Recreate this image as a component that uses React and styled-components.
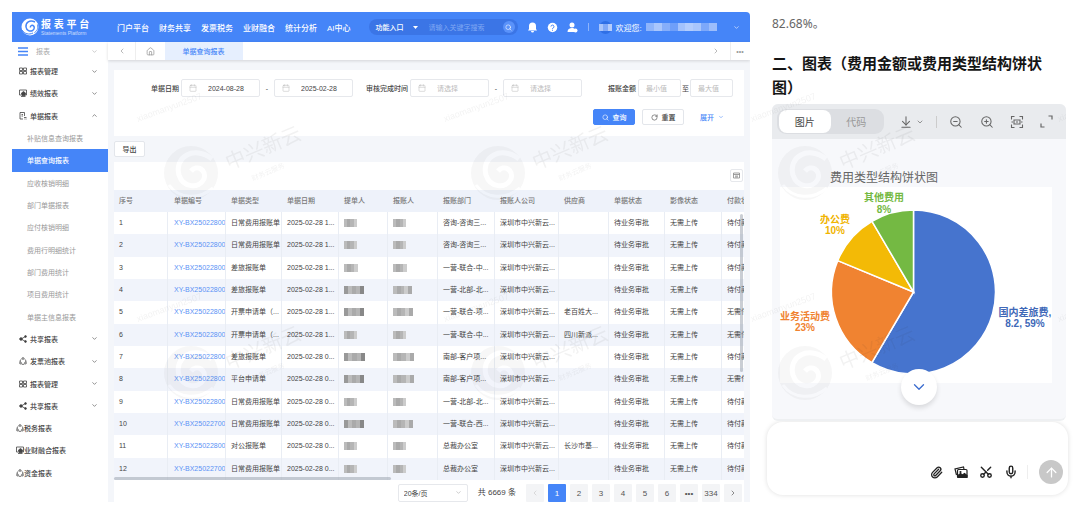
import React from "react";
import styled, { createGlobalStyle, css } from "styled-components";
import {
  ArrowDownToLine,
  ArrowUp,
  Calendar,
  ChevronDown,
  ChevronLeft,
  ChevronRight,
  ChevronUp,
  House,
  Mic,
  Paperclip,
  RotateCw,
  Scissors,
  Search,
  ZoomIn,
  ZoomOut,
} from "lucide-react";

const GlobalStyle = createGlobalStyle`
  * { box-sizing: border-box; }
  body {
    margin: 0;
    background: #fff;
    color: #444;
    font-family: "Liberation Sans", "Noto Sans CJK SC", sans-serif;
    font-size: 7px;
  }
  button, input, select, textarea { font: inherit; color: inherit; margin: 0; }
  button { cursor: pointer; padding: 0; border: 0; background: none; }
  a { color: inherit; text-decoration: none; }
  h2, h3, p, ul { margin: 0; padding: 0; }
  ul { list-style: none; }
  svg { display: block; flex: none; }
`;

const blue = "#4585f8";

const Page = styled.div`
  position: relative;
  display: grid;
  grid-template-columns: minmax(0, 738fr) minmax(0, 305fr);
  column-gap: 15px;
  min-height: 100vh;
  padding: 12px 10px 14px 12px;
`;

/* ---------- report platform ---------- */

const Platform = styled.section`
  display: flex;
  flex-direction: column;
  border-radius: 0 4px 0 0;
  overflow: hidden;
`;

const TopBar = styled.header`
  display: flex;
  align-items: center;
  height: 30px;
  padding: 0 10px 0 9px;
  background: ${blue};
  color: #fff;
`;

const Brand = styled.a`
  display: flex;
  align-items: center;
  gap: 2px;
  width: 96px;
`;

const BrandName = styled.strong`
  display: block;
  font-size: 10px;
  line-height: 12px;
  font-weight: 700;
  white-space: nowrap;
`;

const BrandSub = styled.small`
  display: block;
  font-size: 5px;
  line-height: 5px;
  opacity: 0.7;
  white-space: nowrap;
`;

const Nav = styled.nav`
  display: flex;
  gap: 10px;
  font-size: 8px;
  font-weight: 500;
  white-space: nowrap;
`;

const SearchPill = styled.form`
  display: flex;
  align-items: center;
  width: 149px;
  height: 16px;
  margin-left: 18px;
  padding: 0 3px 0 7px;
  border-radius: 8px;
  background: #3b75e6;
`;

const EntryButton = styled.button`
  display: flex;
  align-items: center;
  gap: 9px;
  margin-right: 11px;
  font-weight: 500;
  white-space: nowrap;
`;

const SearchInput = styled.input`
  flex: 1;
  min-width: 0;
  padding: 0;
  border: 0;
  outline: 0;
  background: none;
  &::placeholder { color: #7fa7f3; opacity: 1; }
`;

const RoundSearch = styled.button`
  display: grid;
  place-items: center;
  width: 12px;
  height: 12px;
  border-radius: 50%;
  background: #5a92fa;
`;

const TopIcons = styled.div`
  display: flex;
  gap: 9px;
  margin-left: 9px;
`;

const TopDivider = styled.span`
  width: 1px;
  height: 8px;
  margin: 0 10px;
  background: #8db4fb;
`;

const User = styled.div`
  display: flex;
  flex: 1;
  align-items: center;
  gap: 4px;
  font-size: 8px;
  white-space: nowrap;
`;

const Avatar = styled.span`
  display: grid;
  place-items: center;
  width: 13px;
  height: 13px;
  border-radius: 50%;
  background: #2f6fe6;
`;

const UserMore = styled.button`
  margin-left: auto;
`;

const Mosaic = styled.span`
  display: block;
  width: ${(p) => p.$w}px;
  height: ${(p) => p.$h || 8}px;
  background: ${(p) =>
    `linear-gradient(90deg, ${p.$tones
      .map((t, i) => `${t} ${(i * 100) / p.$tones.length}% ${((i + 1) * 100) / p.$tones.length}%`)
      .join(", ")})`};
`;

const Body = styled.div`
  display: flex;
  flex: 1;
`;

const Side = styled.aside`
  display: flex;
  flex-direction: column;
  width: 96px;
  padding-bottom: 18px;
  background: #fff;
`;

const SideTop = styled.div`
  display: flex;
  align-items: center;
  gap: 8px;
  height: 18px;
  padding: 0 10px 0 6px;
  color: #aaa;
`;

const Menu = styled.ul`
  display: flex;
  flex: 1;
  flex-direction: column;
`;

const MenuItem = styled.li`
  display: flex;
  flex: 1;
`;

const menuKinds = {
  group: css`
    gap: 3px;
    padding: 0 10px 0 7px;
    font-weight: 500;
  `,
  sub: css`
    padding-left: 15px;
    color: #999;
  `,
  active: css`
    padding-left: 15px;
    background: ${blue};
    color: #fff;
    font-weight: 500;
  `,
  flat: css`
    padding-left: 4px;
    font-weight: 500;
  `,
};

const MenuLink = styled.a`
  display: flex;
  flex: 1;
  align-items: center;
  white-space: nowrap;
  ${(p) => menuKinds[p.$kind]}
`;

const Push = styled.span`
  margin-left: auto;
`;

const Main = styled.main`
  display: flex;
  flex: 1;
  flex-direction: column;
  min-width: 0;
  background: #f4f6fa;
`;

const Tabs = styled.div`
  display: flex;
  height: 18px;
  background: #fff;
  box-shadow: 0 1px 3px rgba(0, 0, 0, 0.14);
`;

const TabButton = styled.button`
  display: grid;
  place-items: center;
  width: ${(p) => p.$w}px;
  color: ${(p) => (p.$on ? blue : "#999")};
  background: ${(p) => (p.$on ? "#e6effe" : "#fff")};
  border-right: 1px solid ${(p) => (p.$edge ? "#eee" : "transparent")};
  font-weight: ${(p) => (p.$on ? 500 : 400)};
  margin-left: ${(p) => (p.$last ? "auto" : "0")};
`;

const Content = styled.div`
  display: flex;
  flex: 1;
  flex-direction: column;
  padding: 10px 6px 0 6px;
`;

const Filters = styled.form`
  height: 66px;
  padding: 9px 11px 0 37px;
  background: #fff;
`;

const FilterRow = styled.div`
  display: flex;
  align-items: center;
  white-space: nowrap;
`;

const FieldLabel = styled.label`
  margin-right: 2px;
  margin-left: ${(p) => p.$before || 0}px;
  font-weight: 500;
`;

const Field = styled.span`
  display: flex;
  align-items: center;
  flex: ${(p) => (p.$short ? "43 1 43px" : "79 1 79px")};
  min-width: 0;
  height: 18px;
  padding: 0 7px;
  border: 1px solid #e6e8ec;
  border-radius: 2px;
  color: #bbb;
`;

const FieldInput = styled.input`
  flex: 1;
  min-width: 0;
  padding: 0 0 0 ${(p) => (p.$short ? 0 : 11)}px;
  border: 0;
  outline: 0;
  background: none;
  color: #444;
  &::placeholder { color: #bbb; opacity: 1; }
`;

const Dash = styled.span`
  width: 14px;
  text-align: center;
`;

const To = styled.span`
  width: 9px;
  text-align: center;
`;

const Actions = styled.div`
  display: flex;
  justify-content: flex-end;
  gap: 7px;
  margin-top: 12px;
`;

const ActionButton = styled.button`
  display: flex;
  align-items: center;
  justify-content: center;
  gap: 4px;
  width: 42px;
  height: 16px;
  border: ${(p) => (p.$kind === "text" ? "0" : "1px solid")};
  border-color: ${(p) => (p.$kind === "primary" ? blue : "#e3e6eb")};
  border-radius: 2px;
  background: ${(p) => (p.$kind === "primary" ? blue : "#fff")};
  color: ${(p) => (p.$kind === "primary" ? "#fff" : p.$kind === "text" ? blue : "#444")};
  font-weight: 500;
`;

const ExportBar = styled.div`
  display: flex;
  align-items: center;
  height: 26px;
`;

const ExportButton = styled.button`
  width: 31px;
  height: 16px;
  border: 1px solid #e3e6eb;
  border-radius: 2px;
  background: #fff;
  font-weight: 500;
`;

const TableTools = styled.div`
  display: flex;
  justify-content: flex-end;
  height: 28px;
  padding: 7px 1px 0;
  background: #fff;
`;

const ToolButton = styled.button`
  display: grid;
  place-items: center;
  width: 13px;
  height: 13px;
  border: 1px solid #e6e8ec;
  border-radius: 2px;
`;

const TableBox = styled.div`
  position: relative;
  background: #fff;
`;

const Table = styled.table`
  width: 100%;
  height: 290px;
  table-layout: fixed;
  border-collapse: separate;
  border-spacing: 0;
  th, td {
    height: 22px;
    padding: 0 0 0 5px;
    overflow: hidden;
    text-align: left;
    white-space: nowrap;
    line-height: 10px;
    border-right: 1px solid #e9edf4;
  }
  th { background: #eef2fa; color: #777; font-weight: 500; border-color: #eef2fa; }
  tr:nth-child(even) td { background: #f1f4fb; }
  th:nth-child(2), td:nth-child(2) { padding-left: 6px; }
  th:last-child, td:last-child { border-right: 0; }
`;

const CodeLink = styled.a`
  color: #5a92f5;
`;

const ScrollThumb = styled.span`
  position: absolute;
  border-radius: 2px;
  background: rgba(150, 158, 170, 0.5);
  ${(p) =>
    p.$vertical
      ? css`
          top: 24px;
          right: 1px;
          width: 3px;
          height: 158px;
        `
      : css`
          left: 0;
          bottom: 0;
          width: 44%;
          height: 3px;
        `}
`;

const Pager = styled.div`
  display: flex;
  flex: 1;
  align-items: flex-start;
  justify-content: flex-end;
  gap: 4px;
  padding: 4px 2px 0;
  background: #fff;
  font-size: 8px;
`;

const SizePick = styled.span`
  position: relative;
  display: flex;
  width: 70px;
  height: 18px;
  svg { position: absolute; right: 6px; top: 5px; color: #aaa; }
`;

const SizeSelect = styled.select`
  width: 100%;
  padding: 0 5px;
  appearance: none;
  border: 1px solid #e6e8ec;
  border-radius: 2px;
  background: #fff;
  font-size: 7px;
`;

const Total = styled.span`
  margin: 0 6px 0 6px;
  line-height: 18px;
`;

const PageButton = styled.button`
  width: 18px;
  height: 18px;
  display: grid;
  place-items: center;
  border-radius: 1px;
  background: ${(p) => (p.$on ? blue : "#f3f4f6")};
  color: ${(p) => (p.$on ? "#fff" : p.$off ? "#ccc" : "#555")};
`;

/* ---------- chat ---------- */

const Chat = styled.section`
  display: flex;
  flex-direction: column;
`;

const Message = styled.article`
  padding: 0 4px 0 7px;
  font-family: "Noto Sans", "Noto Sans CJK SC", sans-serif;
`;

const Line = styled.p`
  padding-top: 3px;
  font-size: 12px;
  line-height: 18px;
  color: #666;
`;

const Heading = styled.h2`
  margin: 18px 0 5px;
  padding-right: 20px;
  font-family: "Noto Sans CJK SC", sans-serif;
  font-size: 15px;
  line-height: 24px;
  font-weight: 700;
  color: #151515;
`;

const Card = styled.div`
  position: relative;
  border-radius: 6px;
  overflow: hidden;
  background: #f7f8fb;
  border-bottom: 2px solid #eef0f2;
`;

const CardBar = styled.div`
  display: flex;
  align-items: center;
  height: 35px;
  padding: 0 13px 0 5px;
  background: #e9ebee;
  color: #666;
`;

const Segments = styled.div`
  display: flex;
  width: 107px;
  height: 25px;
  padding: 1px 2px;
  border-radius: 9px;
  background: #dcdee2;
`;

const Segment = styled.button`
  flex: 1;
  border-radius: 8px;
  font-size: 10px;
  background: ${(p) => (p.$on ? "#fff" : "transparent")};
  color: ${(p) => (p.$on ? "#444" : "#999")};
`;

const BarTools = styled.div`
  display: flex;
  flex: 1;
  align-items: center;
  justify-content: space-between;
  margin-left: 15px;
`;

const DownloadButton = styled.button`
  display: flex;
  align-items: center;
  gap: 3px;
`;

const BarDivider = styled.span`
  width: 1px;
  height: 12px;
  margin: 0 -4px;
  background: #ccc;
`;

const ChartTitle = styled.h3`
  padding: 29px 70px 0 0;
  font-family: "Noto Sans CJK SC", sans-serif;
  font-size: 12px;
  line-height: 18px;
  font-weight: 400;
  text-align: center;
  color: #666;
`;

const ChartBox = styled.div`
  margin: 1px 14px 36px 8px;
  background: #fff;
  svg { width: 100%; height: auto; }
`;

const DownButton = styled.button`
  position: absolute;
  left: 50%;
  bottom: 14px;
  display: grid;
  place-items: center;
  width: 36px;
  height: 36px;
  transform: translateX(-50%);
  border-radius: 50%;
  background: #fff;
  box-shadow: 0 3px 5px rgba(0, 0, 0, 0.12);
  color: #3f6fd0;
`;

const Composer = styled.form`
  display: flex;
  flex-direction: column;
  height: 73px;
  margin: 1px 2px 0 2px;
  padding: 10px 5px 11px 14px;
  border-radius: 16px;
  background: #fff;
  box-shadow: 0 0 5px rgba(0, 0, 0, 0.13);
  color: #222;
`;

const Prompt = styled.textarea`
  flex: 1;
  min-height: 0;
  border: 0;
  padding: 0;
  outline: 0;
  resize: none;
  background: none;
  font-size: 12px;
`;

const ComposerTools = styled.div`
  display: flex;
  align-items: center;
  justify-content: flex-end;
  gap: 11px;
`;

const CutButton = styled.button`
  svg { transform: rotate(-90deg); }
`;

const ComposerDivider = styled.span`
  width: 1px;
  height: 14px;
  margin-left: -2px;
  background: #eee;
`;

const Send = styled.button`
  display: grid;
  place-items: center;
  width: 24px;
  height: 24px;
  border-radius: 50%;
  background: #c8c8c8;
  color: #fff;
`;

const MarkLayer = styled.svg`
  position: absolute;
  left: 130px;
  top: 80px;
  width: calc(100% - 144px);
  height: 340px;
  pointer-events: none;
`;

/* ---------- drawings ---------- */

const LogoMark = () => (
  <svg width="18" height="18" viewBox="0 0 36 36">
    <circle cx="18" cy="18" r="17" fill="#fff" />
    <path d="M28 8C17 3 9 9 10 18c1 7 8 10 13 7 4-2 5-8 1-10-3-1-6 1-5 4" fill="none" stroke={blue} strokeWidth="3" />
    <path d="M2 24c5 8 14 10 22 6" fill="none" stroke={blue} strokeWidth="2" />
    <path d="M33 13c2 8-1 13-6 16" fill="none" stroke={blue} strokeWidth="2" />
  </svg>
);

const svgBase = { width: 8, height: 8, viewBox: "0 0 16 16", fill: "none", stroke: "currentColor", strokeWidth: 1.6 };

const sideIcons = {
  grid: (
    <svg {...svgBase}>
      <path d="M1 2h6v5H1zM9 2h6v5H9zM1 9h6v5H1zM9 9h6v5H9z" />
    </svg>
  ),
  monitor: (
    <svg {...svgBase}>
      <path d="M5 12H1V2h14v10h-3M4 15h9" />
      <path d="M9 5l4 3-1 5H6L5 8z" fill="currentColor" />
    </svg>
  ),
  doc: (
    <svg {...svgBase}>
      <path d="M8 14H2V1h9v7M5 5h3M5 8h3M10 11h5M13 14h2M10 14h1" />
    </svg>
  ),
  share: (
    <svg {...svgBase}>
      <path d="M13 3L4 8l9 5" />
      <circle cx="4" cy="8" r="2.6" fill="currentColor" />
      <circle cx="13" cy="3" r="1.8" fill="currentColor" />
      <circle cx="13" cy="13" r="1.8" fill="currentColor" />
    </svg>
  ),
  nodes: (
    <svg {...svgBase}>
      <path d="M5 4a6 6 0 0 0-3 6M11 4a6 6 0 0 1 3 6M5 14a6 6 0 0 0 6 0" />
      <circle cx="8" cy="3" r="1.8" />
      <circle cx="3" cy="12" r="1.8" />
      <circle cx="13" cy="12" r="1.8" />
    </svg>
  ),
};

const BellIcon = () => (
  <svg width="11" height="11" viewBox="0 0 22 22" fill="#fff">
    <path d="M11 1a7 7 0 0 0-7 7v6l-2 3h18l-2-3V8a7 7 0 0 0-7-7zM8 18h6a3 3 0 0 1-6 0z" />
  </svg>
);

const HelpIcon = () => (
  <svg width="11" height="11" viewBox="0 0 22 22">
    <circle cx="11" cy="11" r="9.5" fill="#fff" />
    <path d="M8 9a3 3 0 1 1 4 3c-1 .4-1 1-1 2M11 15.500v2" fill="none" stroke={blue} strokeWidth="2" />
  </svg>
);

const PersonIcon = () => (
  <svg width="11" height="11" viewBox="0 0 22 22" fill="#fff">
    <circle cx="10" cy="6" r="5" />
    <path d="M1 20c0-6 4-8 9-8 3 0 4 .6 5 1.500V20z" />
    <circle cx="17" cy="17" r="4" />
  </svg>
);

const MenuBars = () => (
  <svg width="10" height="9" viewBox="0 0 10 9" stroke={blue} strokeWidth="1.400">
    <path d="M0 1h10M0 4.500h10M0 8h10" />
  </svg>
);

const FitIcon = () => (
  <svg width="14" height="14" viewBox="0 0 28 28" fill="none" stroke="currentColor" strokeWidth="2.200">
    <path d="M3 9V3h6M19 3h6v6M25 19v6h-6M9 25H3v-6M3 14h3M22 14h3M8 10h12v8H8zM12 14h4" />
  </svg>
);

const ExpandIcon = () => (
  <svg width="13" height="13" viewBox="0 0 26 26" fill="none" stroke="currentColor" strokeWidth="2.400">
    <path d="M17 2h7v7M9 24H2v-7" />
  </svg>
);

const PhotosIcon = () => (
  <svg width="14" height="13" viewBox="0 0 28 26" fill="none" stroke="currentColor" strokeWidth="2.400">
    <path d="M5 18L2 6l17-4 1 4" />
    <rect x="7" y="7" width="19" height="16" rx="2" />
    <path d="M8 19l5-4 4 3 4-3 5 4v4H8z" fill="currentColor" />
    <circle cx="13" cy="12" r="1" fill="currentColor" />
  </svg>
);

const PrintIcon = () => (
  <svg width="7" height="7" viewBox="0 0 14 14" fill="none" stroke="#888" strokeWidth="1.600">
    <path d="M1 2h12v10H1zM1 5h12M4 8h6M4 10h6" />
  </svg>
);

const Watermark = () => (
  <MarkLayer aria-hidden="true">
    <defs>
      <pattern id="mark" width="307" height="200" patternUnits="userSpaceOnUse">
        <g opacity="0.04" fill="#222">
          <circle cx="61" cy="93" r="27" />
          <path d="M82 79c-18-14-38-2-33 16 4 13 20 14 25 4 3-9-7-15-13-8" fill="none" stroke="#fff" strokeWidth="5" />
          <path d="M39 105c10 14 30 15 44 3" fill="none" stroke="#fff" strokeWidth="3" />
        </g>
        <g fill="#222" fillOpacity="0.06" fontFamily="Liberation Sans, Noto Sans CJK SC, sans-serif">
          <text x="99" y="90" fontSize="20" transform="rotate(-23 99 90)">中兴新云</text>
          <text x="123" y="101" fontSize="7" transform="rotate(-23 123 101)">财务云服务</text>
          <text x="8" y="42" fontSize="9" transform="rotate(-20 8 42)">xiaomanyun2507</text>
        </g>
      </pattern>
    </defs>
    <rect width="100%" height="100%" fill="url(#mark)" />
  </MarkLayer>
);

const slices = [
  { name: "国内差旅费", color: "#4674ce", from: 0, to: 210.5 },
  { name: "业务活动费", color: "#f08331", from: 210.5, to: 292.5 },
  { name: "办公费", color: "#f3ba06", from: 292.5, to: 329.6 },
  { name: "其他费用", color: "#74b943", from: 329.6, to: 360 },
];

const cx = 133.5;
const cy = 105;
const r = 82;

const arc = ({ from, to }) => {
  const at = (deg) => {
    const a = (deg * Math.PI) / 180;
    return `${cx + r * Math.sin(a)} ${cy - r * Math.cos(a)}`;
  };
  return `M${cx} ${cy}L${at(from)}A${r} ${r} 0 ${to - from > 180 ? 1 : 0} 1 ${at(to)}Z`;
};

const Pie = () => (
  <svg viewBox="0 0 272 196" overflow="visible" role="img" aria-label="费用类型结构饼状图">
    {slices.map((s) => (
      <path key={s.name} d={arc(s)} fill={s.color} stroke="#fff" strokeWidth="1.500" />
    ))}
    <g fontSize="10" fontWeight="700" textAnchor="middle" fontFamily="Liberation Sans, Noto Sans CJK SC, sans-serif">
      <text x="104" y="14" fill="#74b943">其他费用</text>
      <text x="104" y="26" fill="#74b943">8%</text>
      <text x="55" y="36" fill="#f0b400">办公费</text>
      <text x="55" y="47" fill="#f0b400">10%</text>
      <text x="25" y="133" fill="#f08331">业务活动费</text>
      <text x="25" y="144" fill="#f08331">23%</text>
      <text x="245" y="129" fill="#4068b8">国内差旅费,</text>
      <text x="245" y="140" fill="#4068b8">8.2, 59%</text>
    </g>
  </svg>
);

/* ---------- data ---------- */

const menu = [
  ["group", "报表管理", "grid", "down"],
  ["group", "绩效报表", "monitor", "down"],
  ["group", "单据报表", "doc", "up"],
  ["sub", "补贴信息查询报表"],
  ["active", "单据查询报表"],
  ["sub", "应收核销明细"],
  ["sub", "部门单据报表"],
  ["sub", "应付核销明细"],
  ["sub", "费用行明细统计"],
  ["sub", "部门费用统计"],
  ["sub", "项目费用统计"],
  ["sub", "单据主信息报表"],
  ["group", "共享报表", "share", "down"],
  ["group", "发票池报表", "nodes", "down"],
  ["group", "报表管理", "grid", "down"],
  ["group", "共享报表", "share", "down"],
  ["flat", "税务报表", "nodes"],
  ["flat", "业财融合报表", "monitor"],
  ["flat", "资金报表", "nodes"],
];

const columns = [
  ["序号", 54],
  ["单据编号", 58],
  ["单据类型", 56],
  ["单据日期", 57],
  ["提单人", 49],
  ["报账人", 50],
  ["报账部门", 57],
  ["报账人公司", 64],
  ["供应商", 50],
  ["单据状态", 56],
  ["影像状态", 57],
  ["付款状态", 22],
];

const light = ["#bbb", "#aaa", "#b5b5b5", "#ccc"];
const dark = ["#999", "#bbb", "#aaa", "#b5b5b5", "#888"];

const rows = [
  ["XY-BX25022800", "日常费用报账单", "1", 13, 13, "咨询-咨询三...", "", "待付款"],
  ["XY-BX25022800", "日常费用报账单", "1", 13, 13, "咨询-咨询三...", "", "待付款"],
  ["XY-BX25022800", "差旅报账单", "1", 14, 14, "一营-联合-中...", "", "待付款"],
  ["XY-BX25022800", "差旅报账单", "1", 20, 19, "一营-北部-北...", "", "待付款"],
  ["XY-BX25022800", "开票申请单（...", "1", 20, 20, "一营-联合-项...", "老百姓大...", "无需付款"],
  ["XY-BX25022800", "开票申请单（...", "1", 13, 13, "一营-联合-中...", "四川新派...", "无需付款"],
  ["XY-BX25022800", "差旅报账单", "0", 21, 21, "南部-客户项...", "", "待付款"],
  ["XY-BX25022800", "平台申请单", "0", 20, 21, "南部-客户项...", "", "无需付款"],
  ["XY-BX25022800", "日常费用报账单", "0", 13, 13, "一营-北部-北...", "", "待付款"],
  ["XY-BX25022700", "日常费用报账单", "0", 20, 20, "一营-联合-西...", "", "待付款"],
  ["XY-BX25022800", "对公报账单", "0", 13, 13, "总裁办公室", "长沙市基...", "待付款"],
  ["XY-BX25022700", "日常费用报账单", "0", 13, 13, "总裁办公室", "", "待付款"],
];

const DateField = ({ id, ...rest }) => (
  <Field>
    <Calendar size={8} strokeWidth={1.5} />
    <FieldInput id={id} {...rest} />
  </Field>
);

export default function App() {
  return (
    <>
      <GlobalStyle />
      <Page>
        <Platform>
          <TopBar>
            <Brand href="#">
              <LogoMark />
              <span>
                <BrandName>报 表 平 台</BrandName>
                <BrandSub>Statements Platform</BrandSub>
              </span>
            </Brand>
            <Nav>
              {["门户平台", "财务共享", "发票税务", "业财融合", "统计分析", "AI中心"].map((n) => (
                <a key={n} href="#">{n}</a>
              ))}
            </Nav>
            <SearchPill>
              <EntryButton type="button">
                功能入口
                <svg width="5" height="3" viewBox="0 0 5 3" fill="#fff"><path d="M0 0h5L2.500 3z" /></svg>
              </EntryButton>
              <SearchInput aria-label="搜索" placeholder="请输入关键字搜索" />
              <RoundSearch type="button" aria-label="搜索"><Search size={7} /></RoundSearch>
            </SearchPill>
            <TopIcons>
              <button aria-label="通知"><BellIcon /></button>
              <button aria-label="帮助"><HelpIcon /></button>
              <button aria-label="账号"><PersonIcon /></button>
            </TopIcons>
            <TopDivider />
            <User>
              <Avatar><Mosaic $w={13} $h={7} $tones={["#a9c5fb", "#7fa8f8", "#b6cdfb"]} /></Avatar>
              欢迎您:
              <Mosaic $w={71} $tones={["#8fb5fb", "#a9c6fc", "#86aefa", "#6f9ff9", "#a3c2fc", "#b3cdfd", "#a9c6fc", "#7da8fa", "#9cbdfb"]} />
              <UserMore aria-label="更多"><ChevronDown size={7} /></UserMore>
            </User>
          </TopBar>
          <Body>
            <Side>
              <SideTop>
                <MenuBars />
                报表
                <Push><ChevronDown size={7} /></Push>
              </SideTop>
              <Menu>
                {menu.map(([kind, text, icon, arrow], i) => (
                  <MenuItem key={i}>
                    <MenuLink href="#" $kind={kind}>
                      {icon && sideIcons[icon]}
                      {text}
                      {arrow && <Push>{arrow === "up" ? <ChevronUp size={7} /> : <ChevronDown size={7} />}</Push>}
                    </MenuLink>
                  </MenuItem>
                ))}
              </Menu>
            </Side>
            <Main>
              <Tabs>
                <TabButton $w={28} $edge aria-label="向左"><ChevronLeft size={8} /></TabButton>
                <TabButton $w={29} aria-label="首页"><House size={9} /></TabButton>
                <TabButton $w={78} $on>单据查询报表</TabButton>
                <TabButton $w={29} $edge $last aria-label="向右"><ChevronRight size={8} /></TabButton>
                <TabButton $w={19} aria-label="更多">•••</TabButton>
              </Tabs>
              <Content>
                <Filters>
                  <FilterRow>
                    <FieldLabel htmlFor="d1">单据日期</FieldLabel>
                    <DateField id="d1" defaultValue="2024-08-28" />
                    <Dash>-</Dash>
                    <DateField aria-label="单据日期止" defaultValue="2025-02-28" />
                    <FieldLabel htmlFor="d3" $before={13}>审核完成时间</FieldLabel>
                    <DateField id="d3" placeholder="请选择" />
                    <Dash>-</Dash>
                    <DateField aria-label="审核完成时间止" placeholder="请选择" />
                    <FieldLabel htmlFor="m1" $before={26}>报账金额</FieldLabel>
                    <Field $short><FieldInput $short id="m1" placeholder="最小值" /></Field>
                    <To>至</To>
                    <Field $short><FieldInput $short aria-label="最大值" placeholder="最大值" /></Field>
                  </FilterRow>
                  <Actions>
                    <ActionButton type="button" $kind="primary"><Search size={7} />查询</ActionButton>
                    <ActionButton type="button"><RotateCw size={7} />重置</ActionButton>
                    <ActionButton type="button" $kind="text">展开<ChevronDown size={6} /></ActionButton>
                  </Actions>
                </Filters>
                <ExportBar><ExportButton>导出</ExportButton></ExportBar>
                <TableTools><ToolButton aria-label="列设置"><PrintIcon /></ToolButton></TableTools>
                <TableBox>
                  <Table>
                    <colgroup>
                      {columns.map(([name, w]) => <col key={name} width={w} />)}
                    </colgroup>
                    <thead>
                      <tr>{columns.map(([name]) => <th key={name}>{name}</th>)}</tr>
                    </thead>
                    <tbody>
                      {rows.map(([code, type, hour, a, b, dept, vendor, pay], i) => (
                        <tr key={i}>
                          <td>{i + 1}</td>
                          <td><CodeLink href="#">{code}</CodeLink></td>
                          <td>{type}</td>
                          <td>2025-02-28 {hour}...</td>
                          <td><Mosaic $w={a} $tones={a > 15 ? dark : light} /></td>
                          <td><Mosaic $w={b} $tones={b > 15 ? [...light, "#aaa"] : light} /></td>
                          <td>{dept}</td>
                          <td>深圳市中兴新云...</td>
                          <td>{vendor}</td>
                          <td>待业务审批</td>
                          <td>无需上传</td>
                          <td>{pay}</td>
                        </tr>
                      ))}
                    </tbody>
                  </Table>
                  <ScrollThumb $vertical />
                  <ScrollThumb />
                </TableBox>
                <Pager>
                  <SizePick>
                    <SizeSelect aria-label="每页条数"><option>20条/页</option></SizeSelect>
                    <ChevronDown size={7} />
                  </SizePick>
                  <Total>共 6669 条</Total>
                  <PageButton $off aria-label="上一页"><ChevronLeft size={8} /></PageButton>
                  {["1", "2", "3", "4", "5", "6", "•••", "334"].map((n) => (
                    <PageButton key={n} $on={n === "1"}>{n}</PageButton>
                  ))}
                  <PageButton aria-label="下一页"><ChevronRight size={8} /></PageButton>
                </Pager>
              </Content>
            </Main>
          </Body>
        </Platform>

        <Chat>
          <Message>
            <Line>82.68%。</Line>
            <Heading>二、图表（费用金额或费用类型结构饼状图）</Heading>
            <Card>
              <CardBar>
                <Segments>
                  <Segment $on>图片</Segment>
                  <Segment>代码</Segment>
                </Segments>
                <BarTools>
                  <DownloadButton aria-label="下载"><ArrowDownToLine size={14} strokeWidth={1.8} /><ChevronDown size={8} /></DownloadButton>
                  <BarDivider />
                  <button aria-label="缩小"><ZoomOut size={14} strokeWidth={1.8} /></button>
                  <button aria-label="放大"><ZoomIn size={14} strokeWidth={1.8} /></button>
                  <button aria-label="适应"><FitIcon /></button>
                  <button aria-label="全屏"><ExpandIcon /></button>
                </BarTools>
              </CardBar>
              <ChartTitle>费用类型结构饼状图</ChartTitle>
              <ChartBox><Pie /></ChartBox>
              <DownButton aria-label="滚动到底部"><ChevronDown size={18} strokeWidth={1.8} /></DownButton>
            </Card>
          </Message>
          <Composer>
            <Prompt aria-label="输入消息" />
            <ComposerTools>
              <button type="button" aria-label="附件"><Paperclip size={13} strokeWidth={2.4} /></button>
              <button type="button" aria-label="图片"><PhotosIcon /></button>
              <CutButton type="button" aria-label="截图"><Scissors size={14} strokeWidth={2.4} /></CutButton>
              <button type="button" aria-label="语音"><Mic size={14} strokeWidth={2.4} /></button>
              <ComposerDivider />
              <Send type="button" aria-label="发送"><ArrowUp size={15} /></Send>
            </ComposerTools>
          </Composer>
        </Chat>
        <Watermark />
      </Page>
    </>
  );
}
